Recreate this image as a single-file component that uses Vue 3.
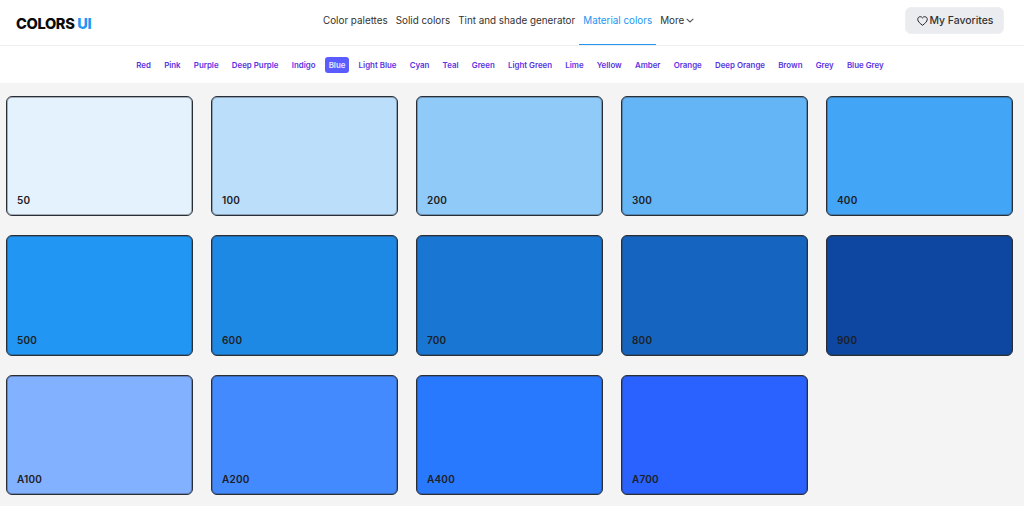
<script setup>
const navLinks = [
  { label: 'Color palettes' },
  { label: 'Solid colors' },
  { label: 'Tint and shade generator' },
  { label: 'Material colors', active: true },
];

const families = [
  'Red', 'Pink', 'Purple', 'Deep Purple', 'Indigo', 'Blue', 'Light Blue', 'Cyan', 'Teal', 'Green',
  'Light Green', 'Lime', 'Yellow', 'Amber', 'Orange', 'Deep Orange', 'Brown', 'Grey', 'Blue Grey',
];

const shades = [
  { name: '50', color: '#e3f2fd' },
  { name: '100', color: '#bbdefb' },
  { name: '200', color: '#90caf9' },
  { name: '300', color: '#64b5f6' },
  { name: '400', color: '#42a5f5' },
  { name: '500', color: '#2196f3' },
  { name: '600', color: '#1e88e5' },
  { name: '700', color: '#1976d2' },
  { name: '800', color: '#1565c0' },
  { name: '900', color: '#0d47a1' },
  { name: 'A100', color: '#82b1ff' },
  { name: 'A200', color: '#448aff' },
  { name: 'A400', color: '#2979ff' },
  { name: 'A700', color: '#2962ff' },
];
</script>

<template>
  <div class="page">
    <header class="topbar">
      <div class="logo">COLORS <span>UI</span></div>
      <nav class="nav">
        <a v-for="link in navLinks" :key="link.label" class="nav-link" :class="{ active: link.active }">
          {{ link.label }}
        </a>
        <a class="nav-link">
          More
          <svg class="chevron" width="8" height="5" viewBox="0 0 8 5" fill="none">
            <path d="M0.7 0.8L4 4L7.3 0.8" stroke="#555" stroke-width="1.1" />
          </svg>
        </a>
      </nav>
      <button class="fav">
        <svg width="11" height="10" viewBox="0 0 24 22" fill="none">
          <path
            d="M12 20.5C7 16.4 1.5 12.4 1.5 7.2 1.5 4 4 1.5 7 1.5c2 0 3.9 1 5 2.8 1.1-1.8 3-2.8 5-2.8 3 0 5.5 2.5 5.5 5.7 0 5.2-5.5 9.2-10.5 13.3z"
            stroke="#222"
            stroke-width="2.2"
            stroke-linejoin="round"
          />
        </svg>
        My Favorites
      </button>
    </header>

    <div class="families">
      <a v-for="family in families" :key="family" class="family" :class="{ selected: family === 'Blue' }">
        {{ family }}
      </a>
    </div>

    <main class="grid">
      <div v-for="shade in shades" :key="shade.name" class="swatch" :style="{ backgroundColor: shade.color }">
        <span class="shade-name">{{ shade.name }}</span>
      </div>
    </main>
  </div>
</template>

<style>
html,
body {
  margin: 0;
  background: #f4f4f4;
}
</style>

<style scoped>
.page {
  width: 1024px;
  height: 506px;
  overflow: hidden;
  background: #f4f4f4;
  font-family: Inter, 'Liberation Sans', sans-serif;
}
.topbar {
  height: 45px;
  display: flex;
  align-items: center;
  padding: 0 20px 0 16px;
  background: #fff;
  border-bottom: 1px solid #eeeeee;
}
.logo {
  width: 303px;
  padding-top: 2px;
  font-size: 14.6px;
  font-weight: 800;
  letter-spacing: -0.35px;
  color: #0b0b0b;
  white-space: pre;
}
.logo span {
  color: #2196f3;
}
.nav {
  display: flex;
  align-items: stretch;
  height: 45px;
}
.nav-link {
  display: flex;
  align-items: center;
  gap: 2px;
  padding: 0 4px 5px;
  font-size: 9.85px;
  color: #333;
  white-space: nowrap;
  border-bottom: 1px solid transparent;
}
.nav-link.active {
  color: #2196f3;
  border-bottom-color: #2196f3;
}
.chevron {
  margin-top: 1px;
}
.fav {
  width: 99px;
  height: 27px;
  margin-left: auto;
  margin-bottom: 4px;
  display: flex;
  align-items: center;
  justify-content: center;
  gap: 2px;
  padding: 0 0 0 1px;
  border: 1px solid #eeeff2;
  border-radius: 6px;
  background: #ebecf0;
  font-family: inherit;
  font-size: 10.4px;
  font-weight: 500;
  color: #333;
}
.families {
  box-sizing: border-box;
  height: 37px;
  padding: 1px 4px 0 0;
  display: flex;
  align-items: center;
  justify-content: center;
  gap: 2px;
  background: #fff;
}
.family {
  padding: 3.5px 5.6px;
  border-radius: 3px;
  font-size: 7.9px;
  line-height: 9px;
  font-weight: 600;
  color: #5a32e0;
  white-space: nowrap;
}
.family.selected {
  margin: 0 1.6px;
  padding: 3.5px 4px;
  background: #5b5cff;
  color: #e8e8ff;
}
.grid {
  display: grid;
  grid-template-columns: repeat(5, 187px);
  grid-auto-rows: 120.5px;
  column-gap: 18px;
  row-gap: 19px;
  padding: 12.5px 6px;
}
.swatch {
  box-sizing: border-box;
  display: flex;
  align-items: flex-end;
  padding: 0 10px 9px;
  border: 1px solid #2a2e35;
  border-radius: 6px;
  box-shadow: inset 0 0 0 1px rgba(45, 50, 60, 0.35);
}
.shade-name {
  font-size: 10px;
  line-height: 12px;
  font-weight: 600;
  letter-spacing: 0.2px;
  color: #1d2024;
}
</style>
